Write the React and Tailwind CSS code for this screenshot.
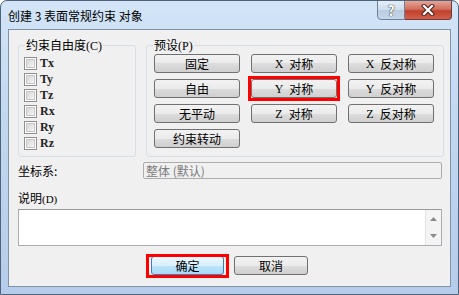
import React from 'react';

const btn =
  'h-[19px] flex items-center justify-center rounded-[3px] border border-[#707070] bg-[linear-gradient(#f2f2f2,#ebebeb_50%,#dddddd_50%,#cfcfcf)] text-[12px] leading-none text-black';

const Checkbox = ({ label }) => (
  <div className="h-[16px] flex items-center">
    <span className="w-[13px] h-[13px] border border-[#8f8f8f] bg-white p-[1px]">
      <span className="block w-full h-full border border-[#c6c6c6] bg-[linear-gradient(135deg,#d8d8d8,#f4f4f4)]" />
    </span>
    <span className="ml-[3px] text-[12px] leading-none font-['Liberation_Serif',serif] font-bold text-[#222]">{label}</span>
  </div>
);

const Preset = ({ text, mark }) => {
  // axis letter in the serif face, rest in CJK
  const parts = text.split(' ');
  return (
    <div className="relative">
      <div className={btn}>
        {parts.length > 1 ? (
          <>
            <span className="mr-[6px] font-['Liberation_Serif',serif]">{parts[0]}</span>
            {parts[1]}
          </>
        ) : (
          text
        )}
      </div>
      {mark && <span className="absolute -inset-[3px] border-[3px] border-[#ff0000]" />}
    </div>
  );
};

const App = () => {
  const presets = [
    ['固定', 'X 对称', 'X 反对称'],
    ['自由', 'Y 对称', 'Y 反对称'],
    ['无平动', 'Z 对称', 'Z 反对称'],
    ['约束转动', null, null],
  ];

  return (
    <div className="w-[459px] h-[295px] flex flex-col overflow-hidden rounded-t-[7px] border border-[#4f637b] bg-[linear-gradient(#d3e5f7,#c2d8f0_40%,#b5cdea)] font-['Noto_Sans_CJK_SC',sans-serif]">
      {/* --- TITLE BAR --- */}
      <div className="h-[28px] flex items-start">
        <div className="pl-[7px] pt-[7px] text-[12px] leading-[16px] text-black">创建 3 表面常规约束 对象</div>
        <div className="ml-auto mr-[6px] flex -mt-px">
          <div className="w-[28px] h-[20px] flex items-center justify-center rounded-bl-[4px] border border-[#6f819a] bg-[linear-gradient(#e4eef9,#cddcec_50%,#b9cbe0_50%,#c6d7ea)] text-[14px] font-bold leading-none text-white [text-shadow:0_0_1px_#222,0_0_1px_#222]">
            ?
          </div>
          <div className="w-[47px] h-[20px] flex items-center justify-center rounded-br-[4px] border border-l-0 border-[#6f3a35] bg-[linear-gradient(#e8a496,#d0705e_45%,#c0402c_55%,#d35f4b)]">
            <svg width="14" height="12" viewBox="0 0 14 12">
              <path d="M3 2 L11 10 M11 2 L3 10" stroke="#4a2320" strokeWidth="4.2" strokeLinecap="square" />
              <path d="M3 2 L11 10 M11 2 L3 10" stroke="#ffffff" strokeWidth="2.2" strokeLinecap="square" />
            </svg>
          </div>
        </div>
      </div>

      {/* --- CLIENT AREA --- */}
      <div className="flex-1 flex px-[7px] pb-[7px]">
        <div className="flex-1 flex flex-col border border-[#8193a8] bg-[#f0f0f0]">
          <div className="flex mt-[15px]">
            {/* freedom group */}
            <div className="relative ml-[9px] w-[118px] h-[112px] rounded-[3px] border border-[#d5dfe5] pt-[9px] pl-[5px]">
              <span className="absolute -top-[8px] left-[6px] px-[1px] bg-[#f0f0f0] text-[12px] leading-[14px] text-black">
                约束自由度<span className="font-['Liberation_Serif',serif]">(C)</span>
              </span>
              {['Tx', 'Ty', 'Tz', 'Rx', 'Ry', 'Rz'].map((l) => (
                <Checkbox key={l} label={l} />
              ))}
            </div>

            {/* preset group */}
            <div className="relative ml-[10px] w-[298px] h-[112px] rounded-[3px] border border-[#d5dfe5] pt-[8px] pl-[7px]">
              <span className="absolute -top-[8px] left-[6px] px-[1px] bg-[#f0f0f0] text-[12px] leading-[14px] text-black">
                预设<span className="font-['Liberation_Serif',serif]">(P)</span>
              </span>
              <div className="grid grid-cols-[86px_86px_86px] gap-x-[11px] gap-y-[6px]">
                {presets.flat().map((t, i) =>
                  t ? <Preset key={i} text={t} mark={t === 'Y 对称'} /> : <div key={i} />
                )}
              </div>
            </div>
          </div>

          {/* coordinate system */}
          <div className="mt-[5px] flex items-center h-[17px]">
            <span className="ml-[9px] text-[12px] leading-none text-black">坐标系:</span>
            <div className="ml-auto mr-[8px] w-[299px] h-[17px] flex items-center rounded-[2px] border border-[#acacac] bg-[#f0f0f0] pl-[2px] text-[12px] leading-none text-[#7a7a7a]">
              整体 (默认)
            </div>
          </div>

          {/* description */}
          <div className="mt-[12px] ml-[9px] text-[12px] leading-[14px] text-black">
            说明<span className="font-['Liberation_Serif',serif] text-[11px]">(D)</span>
          </div>
          <div className="mt-[3px] ml-[9px] mr-[8px] h-[37px] flex border border-[#abadb3] border-t-[#9a9a9a] bg-white">
            <div className="flex-1" />
            <div className="w-[16px] flex flex-col items-center justify-between py-[7px] border-l border-[#e3e3e3] bg-[#f4f4f4]">
              <svg width="7" height="4" viewBox="0 0 7 4"><path d="M3.5 0 L7 4 L0 4 Z" fill="#8a8a8a" /></svg>
              <svg width="7" height="4" viewBox="0 0 7 4"><path d="M0 0 L7 0 L3.5 4 Z" fill="#8a8a8a" /></svg>
            </div>
          </div>

          {/* dialog buttons */}
          <div className="mt-[10px] flex justify-center gap-[10px]">
            <div className="relative">
              <div className="w-[73px] h-[19px] flex items-center justify-center rounded-[3px] border border-[#3c7fb1] bg-[linear-gradient(#eaf6fd,#d9f0fc_50%,#bee6fd_50%,#a7d9f5)] text-[12px] leading-none text-black">
                确定
              </div>
              <span className="absolute -left-[5px] -right-[5px] -top-[2px] -bottom-[3px] border-[3px] border-[#ff0000]" />
            </div>
            <div className={`${btn} w-[74px]`}>取消</div>
          </div>
        </div>
      </div>
    </div>
  );
};

export default App;
